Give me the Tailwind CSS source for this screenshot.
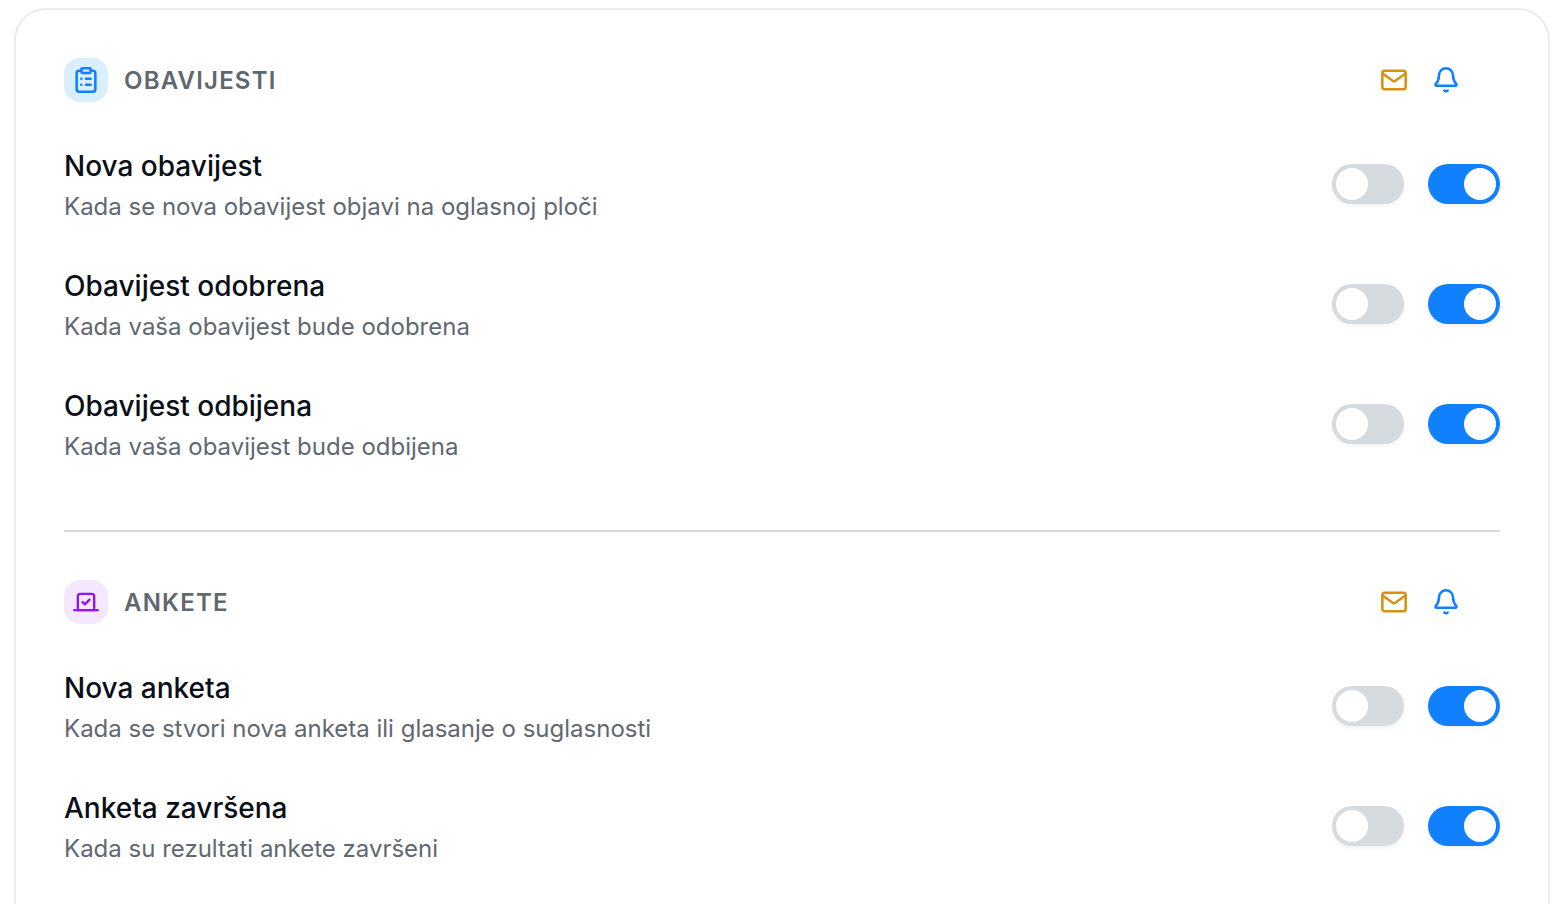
<!DOCTYPE html>
<html lang="hr">
<head>
    <meta charset="UTF-8" />
    <meta name="viewport" content="width=device-width, initial-scale=1" />
    <title>Postavke obavijesti</title>
    <script src="https://cdn.jsdelivr.net/npm/@tailwindcss/browser@4"></script>
</head>
<body class="bg-white font-['Inter','Noto_Sans',sans-serif]">

    <!-- Shared icons -->
    <svg class="hidden" aria-hidden="true">
        <symbol id="icon-mail" viewBox="0 0 24 24">
            <rect x="2" y="4" width="20" height="16" rx="2" />
            <path d="M2.4 6.6 11.2 12.8a1.4 1.4 0 0 0 1.6 0L21.6 6.6" />
        </symbol>
        <symbol id="icon-bell" viewBox="0 0 24 24">
            <path d="M10.6 21a1.8 1.8 0 0 0 2.8 0" />
            <path d="M3.262 15.326A1 1 0 0 0 4 17h16a1 1 0 0 0 .74-1.673C19.41 13.956 18 12.499 18 8A6 6 0 0 0 6 8c0 4.499-1.411 5.956-2.738 7.326" />
        </symbol>
    </svg>

    <main class="mt-2 ml-3.5 mr-2.5 min-h-screen rounded-t-[32px] border-2 border-b-0 border-[#ebebeb] px-12 pt-12">

        <section>
            <header class="flex items-center justify-between pr-10">
                <div class="flex items-center gap-4">
                    <span class="flex size-11 items-center justify-center rounded-2xl bg-[#d9eeff] text-[#1080ff]">
                        <svg class="size-7" viewBox="0 0 24 24" fill="none" stroke="currentColor" stroke-width="2.2" stroke-linecap="round" stroke-linejoin="round">
                            <rect x="8" y="2" width="8" height="4" rx="1" />
                            <path d="M16 4h2a2 2 0 0 1 2 2v14a2 2 0 0 1-2 2H6a2 2 0 0 1-2-2V6a2 2 0 0 1 2-2h2M12 11h4M12 16h4M8 11h.01M8 16h.01" />
                        </svg>
                    </span>
                    <h2 class="pt-0.5 text-2xl font-semibold uppercase tracking-wider text-[#5f6870]">Obavijesti</h2>
                </div>
                <div class="flex gap-6 fill-none stroke-[2.2] [stroke-linecap:round] [stroke-linejoin:round]">
                    <svg class="size-7 stroke-[#d6930f]" role="img" aria-label="E-mail"><use href="#icon-mail" /></svg>
                    <svg class="size-7 stroke-[#1080ff]" role="img" aria-label="Push"><use href="#icon-bell" /></svg>
                </div>
            </header>

            <ul class="mt-11 space-y-11">
                <li class="flex items-center justify-between gap-6">
                    <div>
                        <h3 id="nova-obavijest" class="text-[28px] leading-10 font-medium text-[#0a0f18]">Nova obavijest</h3>
                        <p class="mt-1.5 text-2xl leading-[30px] text-[#5f6870]">Kada se nova obavijest objavi na oglasnoj ploči</p>
                    </div>
                    <div class="flex shrink-0 gap-6">
                        <input type="checkbox" role="switch" aria-labelledby="nova-obavijest" class="h-10 w-18 cursor-pointer appearance-none rounded-full bg-[#d6dbe0] p-1 shadow-[0_2px_4px_rgba(0,0,0,0.06)] before:block before:size-8 before:rounded-full before:bg-white before:transition checked:bg-[#1080ff] checked:before:translate-x-8" />
                        <input type="checkbox" role="switch" aria-labelledby="nova-obavijest" checked class="h-10 w-18 cursor-pointer appearance-none rounded-full bg-[#d6dbe0] p-1 shadow-[0_2px_4px_rgba(0,0,0,0.06)] before:block before:size-8 before:rounded-full before:bg-white before:transition checked:bg-[#1080ff] checked:before:translate-x-8" />
                    </div>
                </li>
                <li class="flex items-center justify-between gap-6">
                    <div>
                        <h3 id="obavijest-odobrena" class="text-[28px] leading-10 font-medium text-[#0a0f18]">Obavijest odobrena</h3>
                        <p class="mt-1.5 text-2xl leading-[30px] text-[#5f6870]">Kada vaša obavijest bude odobrena</p>
                    </div>
                    <div class="flex shrink-0 gap-6">
                        <input type="checkbox" role="switch" aria-labelledby="obavijest-odobrena" class="h-10 w-18 cursor-pointer appearance-none rounded-full bg-[#d6dbe0] p-1 shadow-[0_2px_4px_rgba(0,0,0,0.06)] before:block before:size-8 before:rounded-full before:bg-white before:transition checked:bg-[#1080ff] checked:before:translate-x-8" />
                        <input type="checkbox" role="switch" aria-labelledby="obavijest-odobrena" checked class="h-10 w-18 cursor-pointer appearance-none rounded-full bg-[#d6dbe0] p-1 shadow-[0_2px_4px_rgba(0,0,0,0.06)] before:block before:size-8 before:rounded-full before:bg-white before:transition checked:bg-[#1080ff] checked:before:translate-x-8" />
                    </div>
                </li>
                <li class="flex items-center justify-between gap-6">
                    <div>
                        <h3 id="obavijest-odbijena" class="text-[28px] leading-10 font-medium text-[#0a0f18]">Obavijest odbijena</h3>
                        <p class="mt-1.5 text-2xl leading-[30px] text-[#5f6870]">Kada vaša obavijest bude odbijena</p>
                    </div>
                    <div class="flex shrink-0 gap-6">
                        <input type="checkbox" role="switch" aria-labelledby="obavijest-odbijena" class="h-10 w-18 cursor-pointer appearance-none rounded-full bg-[#d6dbe0] p-1 shadow-[0_2px_4px_rgba(0,0,0,0.06)] before:block before:size-8 before:rounded-full before:bg-white before:transition checked:bg-[#1080ff] checked:before:translate-x-8" />
                        <input type="checkbox" role="switch" aria-labelledby="obavijest-odbijena" checked class="h-10 w-18 cursor-pointer appearance-none rounded-full bg-[#d6dbe0] p-1 shadow-[0_2px_4px_rgba(0,0,0,0.06)] before:block before:size-8 before:rounded-full before:bg-white before:transition checked:bg-[#1080ff] checked:before:translate-x-8" />
                    </div>
                </li>
            </ul>
        </section>

        <section class="mt-17 border-t-2 border-[#d6dbe0] pt-12">
            <header class="flex items-center justify-between pr-10">
                <div class="flex items-center gap-4">
                    <span class="flex size-11 items-center justify-center rounded-2xl bg-[#f3e8ff] text-[#9810fa]">
                        <svg class="size-7" viewBox="0 0 24 24" fill="none" stroke="currentColor" stroke-width="2" stroke-linecap="round" stroke-linejoin="round">
                            <path d="m9 12 2 2 4-4" />
                            <path d="M5 7c0-1.1.9-2 2-2h10a2 2 0 0 1 2 2v12H5V7Z" />
                            <path d="M22 19H2" />
                        </svg>
                    </span>
                    <h2 class="pt-0.5 text-2xl font-semibold uppercase tracking-wider text-[#5f6870]">Ankete</h2>
                </div>
                <div class="flex gap-6 fill-none stroke-[2.2] [stroke-linecap:round] [stroke-linejoin:round]">
                    <svg class="size-7 stroke-[#d6930f]" role="img" aria-label="E-mail"><use href="#icon-mail" /></svg>
                    <svg class="size-7 stroke-[#1080ff]" role="img" aria-label="Push"><use href="#icon-bell" /></svg>
                </div>
            </header>

            <ul class="mt-11 space-y-11">
                <li class="flex items-center justify-between gap-6">
                    <div>
                        <h3 id="nova-anketa" class="text-[28px] leading-10 font-medium text-[#0a0f18]">Nova anketa</h3>
                        <p class="mt-1.5 text-2xl leading-[30px] text-[#5f6870]">Kada se stvori nova anketa ili glasanje o suglasnosti</p>
                    </div>
                    <div class="flex shrink-0 gap-6">
                        <input type="checkbox" role="switch" aria-labelledby="nova-anketa" class="h-10 w-18 cursor-pointer appearance-none rounded-full bg-[#d6dbe0] p-1 shadow-[0_2px_4px_rgba(0,0,0,0.06)] before:block before:size-8 before:rounded-full before:bg-white before:transition checked:bg-[#1080ff] checked:before:translate-x-8" />
                        <input type="checkbox" role="switch" aria-labelledby="nova-anketa" checked class="h-10 w-18 cursor-pointer appearance-none rounded-full bg-[#d6dbe0] p-1 shadow-[0_2px_4px_rgba(0,0,0,0.06)] before:block before:size-8 before:rounded-full before:bg-white before:transition checked:bg-[#1080ff] checked:before:translate-x-8" />
                    </div>
                </li>
                <li class="flex items-center justify-between gap-6">
                    <div>
                        <h3 id="anketa-zavrsena" class="text-[28px] leading-10 font-medium text-[#0a0f18]">Anketa završena</h3>
                        <p class="mt-1.5 text-2xl leading-[30px] text-[#5f6870]">Kada su rezultati ankete završeni</p>
                    </div>
                    <div class="flex shrink-0 gap-6">
                        <input type="checkbox" role="switch" aria-labelledby="anketa-zavrsena" class="h-10 w-18 cursor-pointer appearance-none rounded-full bg-[#d6dbe0] p-1 shadow-[0_2px_4px_rgba(0,0,0,0.06)] before:block before:size-8 before:rounded-full before:bg-white before:transition checked:bg-[#1080ff] checked:before:translate-x-8" />
                        <input type="checkbox" role="switch" aria-labelledby="anketa-zavrsena" checked class="h-10 w-18 cursor-pointer appearance-none rounded-full bg-[#d6dbe0] p-1 shadow-[0_2px_4px_rgba(0,0,0,0.06)] before:block before:size-8 before:rounded-full before:bg-white before:transition checked:bg-[#1080ff] checked:before:translate-x-8" />
                    </div>
                </li>
            </ul>
        </section>
    </main>

</body>
</html>
